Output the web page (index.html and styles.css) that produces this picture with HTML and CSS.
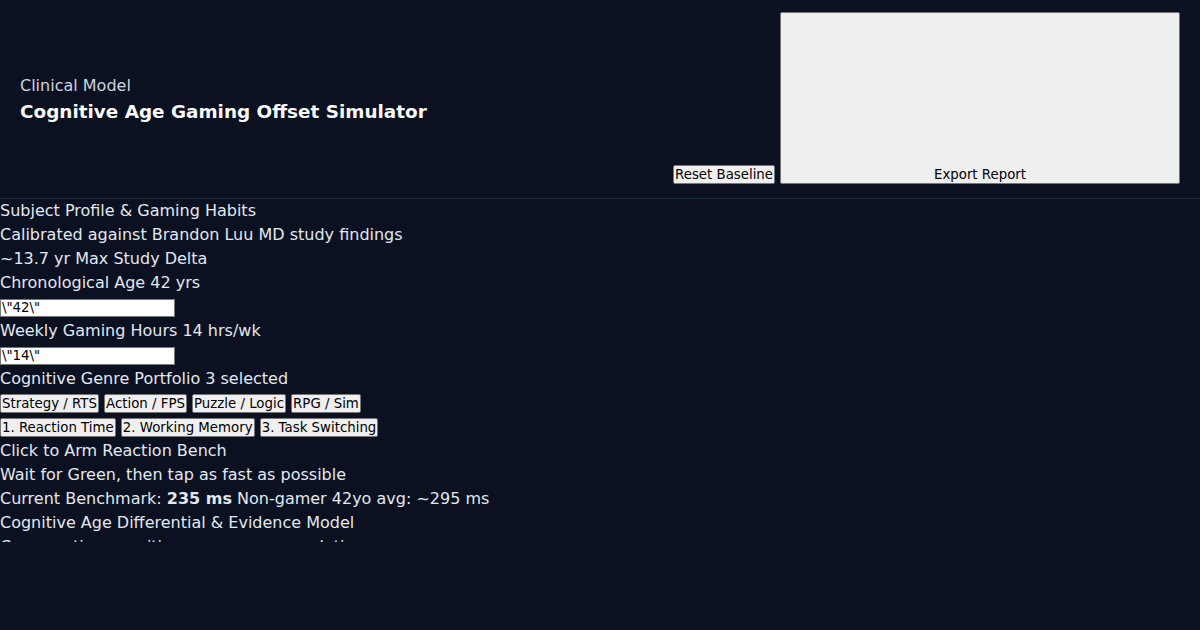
FILE: index.html
```html
<!DOCTYPE html>
<html>
<head>
<meta charset="utf-8">
<link rel="stylesheet" href="styles.css">
</head>
<body>
<header class="top">
  <div class="brand">
    <div class="eyebrow">Clinical Model</div>
    <h1 class="title">Cognitive Age Gaming Offset Simulator</h1>
  </div>
  <div class="actions">
    <button class="btn">Reset Baseline</button>
    <button class="btn export">Export Report</button>
  </div>
</header>
<main class="main">
  <div>Subject Profile &amp; Gaming Habits</div>
  <div>Calibrated against Brandon Luu MD study findings</div>
  <div>~13.7 yr Max Study Delta</div>
  <div>Chronological Age 42 yrs</div>
  <div><input class="field" type="text" value='\"42\"'></div>
  <div>Weekly Gaming Hours 14 hrs/wk</div>
  <div><input class="field" type="text" value='\"14\"'></div>
  <div>Cognitive Genre Portfolio 3 selected</div>
  <div><button class="btn">Strategy / RTS</button> <button class="btn">Action / FPS</button> <button class="btn">Puzzle / Logic</button> <button class="btn">RPG / Sim</button></div>
  <div><button class="btn">1. Reaction Time</button> <button class="btn">2. Working Memory</button> <button class="btn">3. Task Switching</button></div>
  <div>Click to Arm Reaction Bench</div>
  <div>Wait for Green, then tap as fast as possible</div>
  <div>Current Benchmark: <strong>235 ms</strong> Non-gamer 42yo avg: ~295 ms</div>
  <div>Cognitive Age Differential &amp; Evidence Model</div>
  <div>Comparative cognitive age versus population norms</div>
</main>
</body>
</html>
```
FILE: styles.css
```css
* { margin: 0; padding: 0; box-sizing: border-box; }
html, body { background: #0b1120; }
body {
  font-family: "DejaVu Sans", sans-serif;
  font-size: 16px;
  line-height: 1.5;
  color: #e2e8f0;
  height: 630px;
  overflow: hidden;
}
.top {
  display: flex;
  justify-content: space-between;
  align-items: center;
  padding: 12px 20px 14px;
  border-bottom: 1px solid #1e293b;
}
.brand { padding-top: 4px; }
.eyebrow { color: #cbd5e1; font-size: 16px; line-height: 24px; }
.title { font-size: 18.4px; font-weight: bold; color: #f8fafc; line-height: 28px; }
.actions {
  display: flex;
  align-items: flex-end;
  gap: 5px;
}
.btn {
  font-family: "DejaVu Sans", sans-serif;
  font-size: 13.33px;
  line-height: normal;
  color: #000;
  background: #efefef;
  border: 1px solid #767676;
  border-radius: 2px;
  padding: 1px 1px;
}
.export {
  width: 400px;
  height: 172px;
  display: flex;
  align-items: flex-end;
  justify-content: center;
  padding-bottom: 1px;
}
.main {
  height: 343px;
  overflow: hidden;
}
.field {
  width: 175px;
  height: 18px;
  font-family: "DejaVu Sans", sans-serif;
  font-size: 13.33px;
  line-height: normal;
  border: 1px solid #767676;
  background: #fff;
  color: #000;
  padding: 0 1px;
}
strong { font-weight: bold; }
```
